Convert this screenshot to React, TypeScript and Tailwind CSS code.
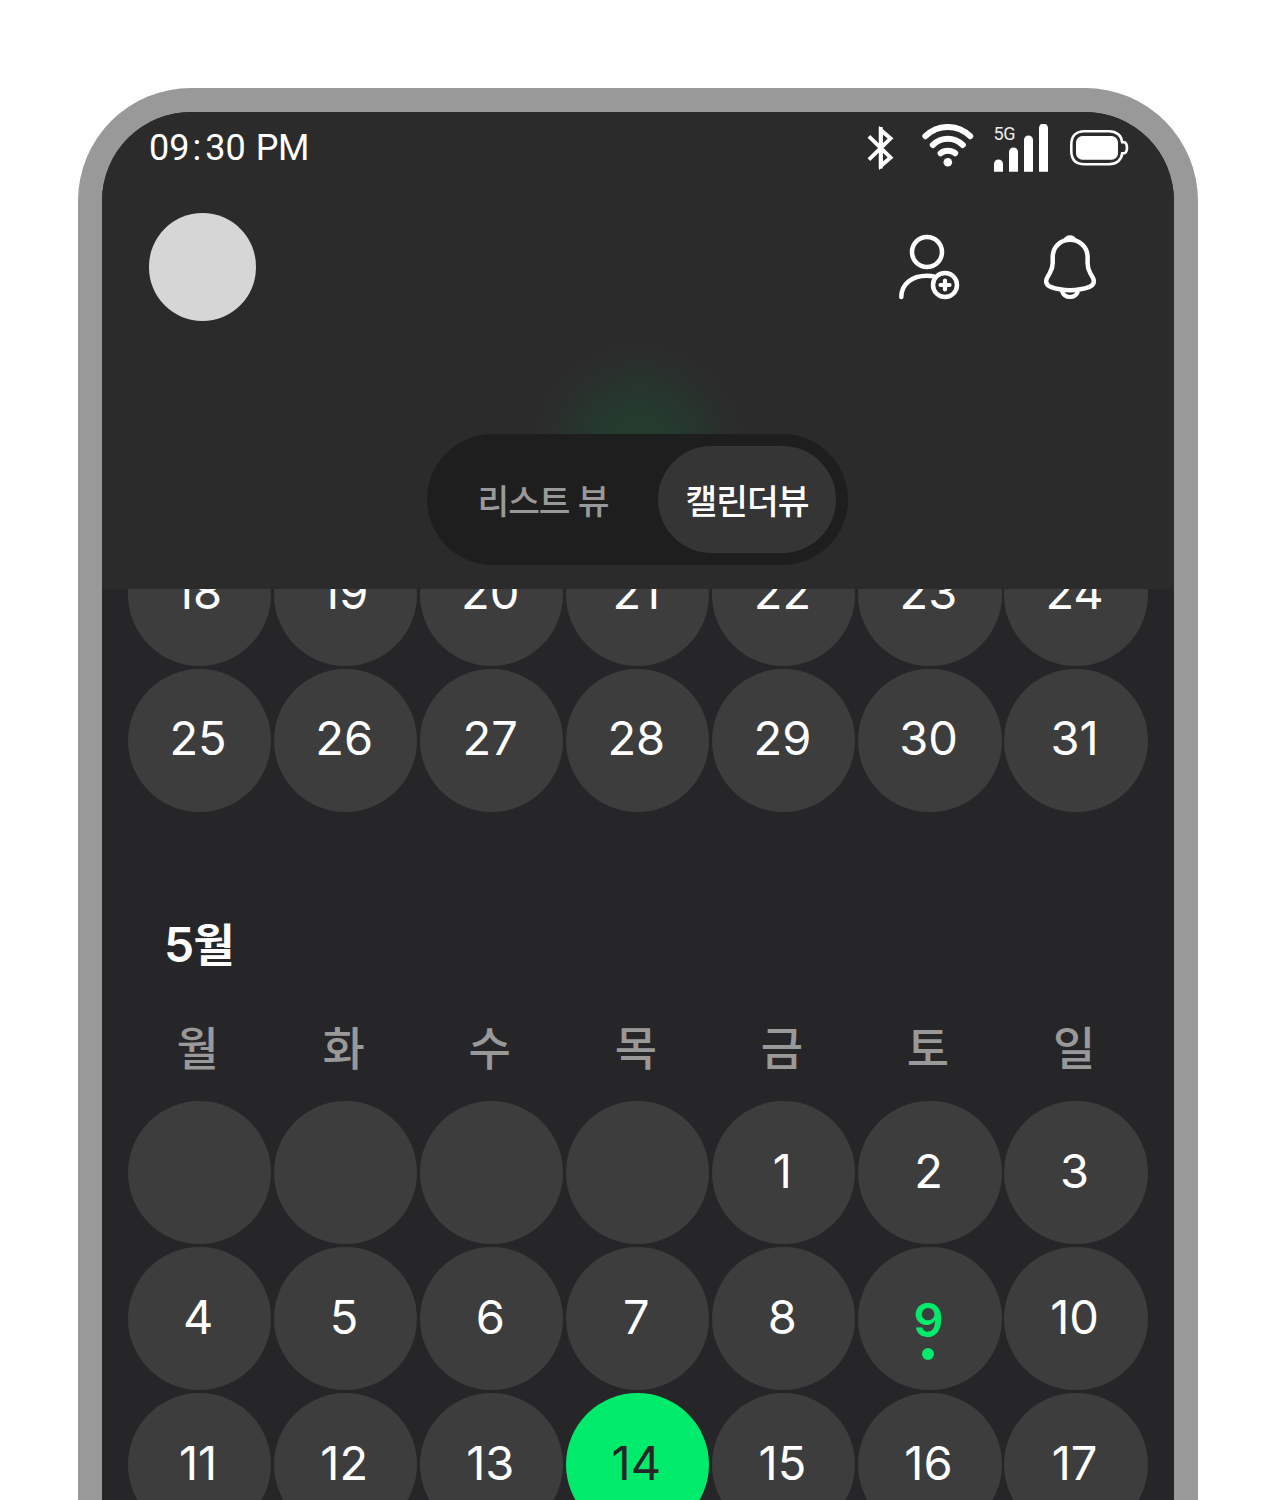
import React from 'react';

const KR = "font-['Inter','Noto_Sans_CJK_KR',sans-serif]";

function Bluetooth() {
  return (
    <svg className="h-[44px] w-[28px]" viewBox="866 126 28 44" fill="none" stroke="#fff" strokeWidth="3.9">
      <path d="M868.900 136.400L890.600 157.600L881 165.800V130.200L890.600 138.400L868.900 159.600" />
      <path d="M880.700 127V168.500" />
    </svg>
  );
}

function Wifi() {
  return (
    <svg className="h-[44px] w-[52px]" viewBox="922 124 52 44" fill="none" stroke="#fff" strokeWidth="6" strokeLinecap="round">
      <path d="M925.400 136.200C938 123.900 957.500 123.900 970.200 136.200" />
      <path d="M932.800 145C941.500 136.600 954 136.600 962.800 145" />
      <path d="M940.600 153.200C944.600 149.800 951 149.800 955.200 153.200" />
      <circle cx="947.800" cy="162.200" r="4.300" fill="#fff" stroke="none" />
    </svg>
  );
}

function Signal() {
  return (
    <div className="relative h-[48px] w-[54px]">
      <svg className="h-[48px] w-[54px]" viewBox="994 124 54 48" fill="#fff">
        <path d="M994 171.700V164a4.500 4.500 0 0 1 9 0v7.700z" />
        <path d="M1009 171.700V152a4.500 4.500 0 0 1 9 0v19.700z" />
        <path d="M1024 171.700V140a4.500 4.500 0 0 1 9 0v31.700z" />
        <path d="M1039 171.700V128a4.500 4.500 0 0 1 9 0v43.700z" />
      </svg>
      <span className="absolute left-0 top-0 font-['Roboto',sans-serif] text-[18px] leading-[20px] tracking-[-0.500px] text-[#ececec]">5G</span>
    </div>
  );
}

function Battery() {
  return (
    <svg className="h-[37px] w-[60px]" viewBox="1070 129 60 37" fill="none">
      <path
        d="M1084.500 131.200H1109C1116.500 131.200 1121.700 135.700 1122.200 142.200H1124.500Q1127 143.500 1127 147.700Q1127 152 1124.500 153.200H1122.200C1121.700 159.800 1116.500 164.200 1109 164.200H1084.500C1076 164.200 1071.300 159.500 1071.300 151V144.400C1071.300 136 1076 131.200 1084.500 131.200Z"
        stroke="#fff"
        strokeWidth="2.600"
      />
      <rect x="1076" y="136" width="42" height="23.700" rx="6.500" fill="#fff" />
    </svg>
  );
}

function AddUser() {
  return (
    <svg className="h-[66px] w-[62px]" viewBox="898 234 62 66" fill="none" stroke="#fff" strokeWidth="4.500">
      <circle cx="927" cy="252" r="15" />
      <path d="M901.300 297C901.300 284 912 275.800 927 275.800C930 275.800 932 276 934.500 276.600" strokeLinecap="round" />
      <circle cx="945" cy="285" r="12" />
      <path d="M945 280.500V289.500M940.500 285H949.500" strokeLinecap="round" strokeWidth="4.200" />
    </svg>
  );
}

function Bell() {
  return (
    <svg className="h-[66px] w-[54px]" viewBox="1043 234 54 66" fill="none" stroke="#fff" strokeWidth="4.500">
      <path d="M1070 239.800C1060 239.800 1052.700 247.500 1052.700 257V263C1052.700 267 1051.800 269.500 1049.800 273L1047 278C1045 282 1047 285.700 1050.500 286.900C1056.500 289.200 1063 290.200 1070 290.200C1077 290.200 1083.500 289.200 1089.500 286.900C1093 285.700 1095 282 1093 278L1090.200 273C1088.200 269.500 1087.600 267 1087.600 263V257C1087.600 247.500 1080 239.800 1070 239.800Z" />
      <path d="M1063 240C1065.500 233.500 1074.500 233.500 1077 240Z" fill="#fff" stroke="none" />
      <path d="M1061.800 291C1064.500 299 1075.500 299 1078.200 291" strokeWidth="4" />
    </svg>
  );
}

type Cell = { label: string; today?: boolean; marked?: boolean };

function Day({ label, today, marked }: Cell) {
  const tone = today ? 'bg-[#00eb6c] text-[#262628]' : 'bg-[#3d3d3d] text-white';
  return (
    <div className={`flex h-[143.200px] w-[143.200px] items-center justify-center rounded-full pb-[4px] pr-[3px] text-[47px] leading-[58px] ${tone}`}>
      {marked ? (
        <div className="flex flex-col items-center pt-[18px] font-semibold text-[#00eb6c]">
          <span>{label}</span>
          <i className="-mt-px size-[12px] rounded-full bg-[#00eb6c]" />
        </div>
      ) : (
        label
      )}
    </div>
  );
}

function Week({ days }: { days: Cell[] }) {
  return (
    <div className="flex h-[143.200px] shrink-0 gap-[2.900px]">
      {days.map((d, i) => (
        <Day key={i} {...d} />
      ))}
    </div>
  );
}

const run = (from: number): Cell[] => Array.from({ length: 7 }, (_, i) => ({ label: String(from + i) }));

const firstWeek: Cell[] = ['', '', '', '', '1', '2', '3'].map((label) => ({ label }));
const secondWeek = run(4).map((d) => ({ ...d, marked: d.label === '9' }));
const thirdWeek = run(11).map((d) => ({ ...d, today: d.label === '14' }));

export default function App() {
  return (
    <div className={`h-[1500px] w-[1276px] overflow-hidden bg-white pl-[77.600px] pt-[88px] ${KR}`}>
      <div className="h-[1600px] w-[1120.600px] rounded-[113px] bg-[#999] p-[24px]">
        <div className="flex h-full flex-col overflow-hidden rounded-[89px] bg-[#262628]">
          <header className="relative isolate flex h-[477px] shrink-0 flex-col overflow-hidden bg-[#2b2b2b]">
            <div className="absolute left-[431px] top-[232px] -z-10 h-[210px] w-[210px] bg-[radial-gradient(closest-side,#243d2e_0%,#243c2e_25%,#26362d_55%,#292f2c_80%,#2b2b2b_100%)]" />
            <div className="flex h-[72px] items-center pl-[47.500px] pr-[44.600px]">
              <span className="font-['Roboto',sans-serif] text-[36px] leading-[42px] text-white">
                09<span className="ml-[3px] mr-[4px]">:</span>30 <span className="ml-px tracking-[-0.500px]">PM</span>
              </span>
              <div className="ml-auto flex items-center">
                <Bluetooth />
                <div className="-mt-[4px] ml-[28px]"><Wifi /></div>
                <div className="ml-[20px]"><Signal /></div>
                <div className="-mt-[2px] ml-[22px]"><Battery /></div>
              </div>
            </div>
            <div className="mt-[29px] flex h-[108px] items-center pl-[47.400px] pr-[77.600px]">
              <div className="size-[107.500px] rounded-full bg-[#d6d6d6]" />
              <div className="ml-auto flex gap-[83px]">
                <AddUser />
                <Bell />
              </div>
            </div>
            <div className="ml-[325.400px] mt-[113px] flex h-[131px] w-[421px] items-center justify-between rounded-full bg-[#1e1e1e] p-[12px] text-[34.500px] font-medium leading-[44px] tracking-[-1px]">
              <span className="flex h-[107px] flex-1 items-center justify-center pr-[11px] pt-[5px] text-[#999]">리스트 뷰</span>
              <span className="flex h-[107px] w-[178px] items-center justify-center rounded-[54px] bg-[#353535] pt-[5px] text-white">캘린더뷰</span>
            </div>
          </header>
          <main className="flex min-h-0 flex-1 flex-col overflow-hidden pl-[26.400px]">
            <div className="-mt-[66.200px] flex shrink-0 flex-col gap-[2.900px]">
              <Week days={run(18)} />
              <Week days={run(25)} />
            </div>
            <h2 className="ml-[36px] mt-[104px] h-[58px] shrink-0 text-[48px] font-semibold leading-[58px] tracking-[-0.960px] text-white">
              5<span className="text-[45px] font-bold leading-[1]">월</span>
            </h2>
            <div className="mt-[45px] flex h-[58px] shrink-0 gap-[2.900px] text-[46px] font-medium leading-[58px] text-[#999]">
              {['월', '화', '수', '목', '금', '토', '일'].map((d) => (
                <span key={d} className="w-[143.200px] pr-[4px] text-center">{d}</span>
              ))}
            </div>
            <div className="mt-[24px] flex shrink-0 flex-col gap-[2.900px]">
              <Week days={firstWeek} />
              <Week days={secondWeek} />
              <Week days={thirdWeek} />
            </div>
          </main>
        </div>
      </div>
    </div>
  );
}
